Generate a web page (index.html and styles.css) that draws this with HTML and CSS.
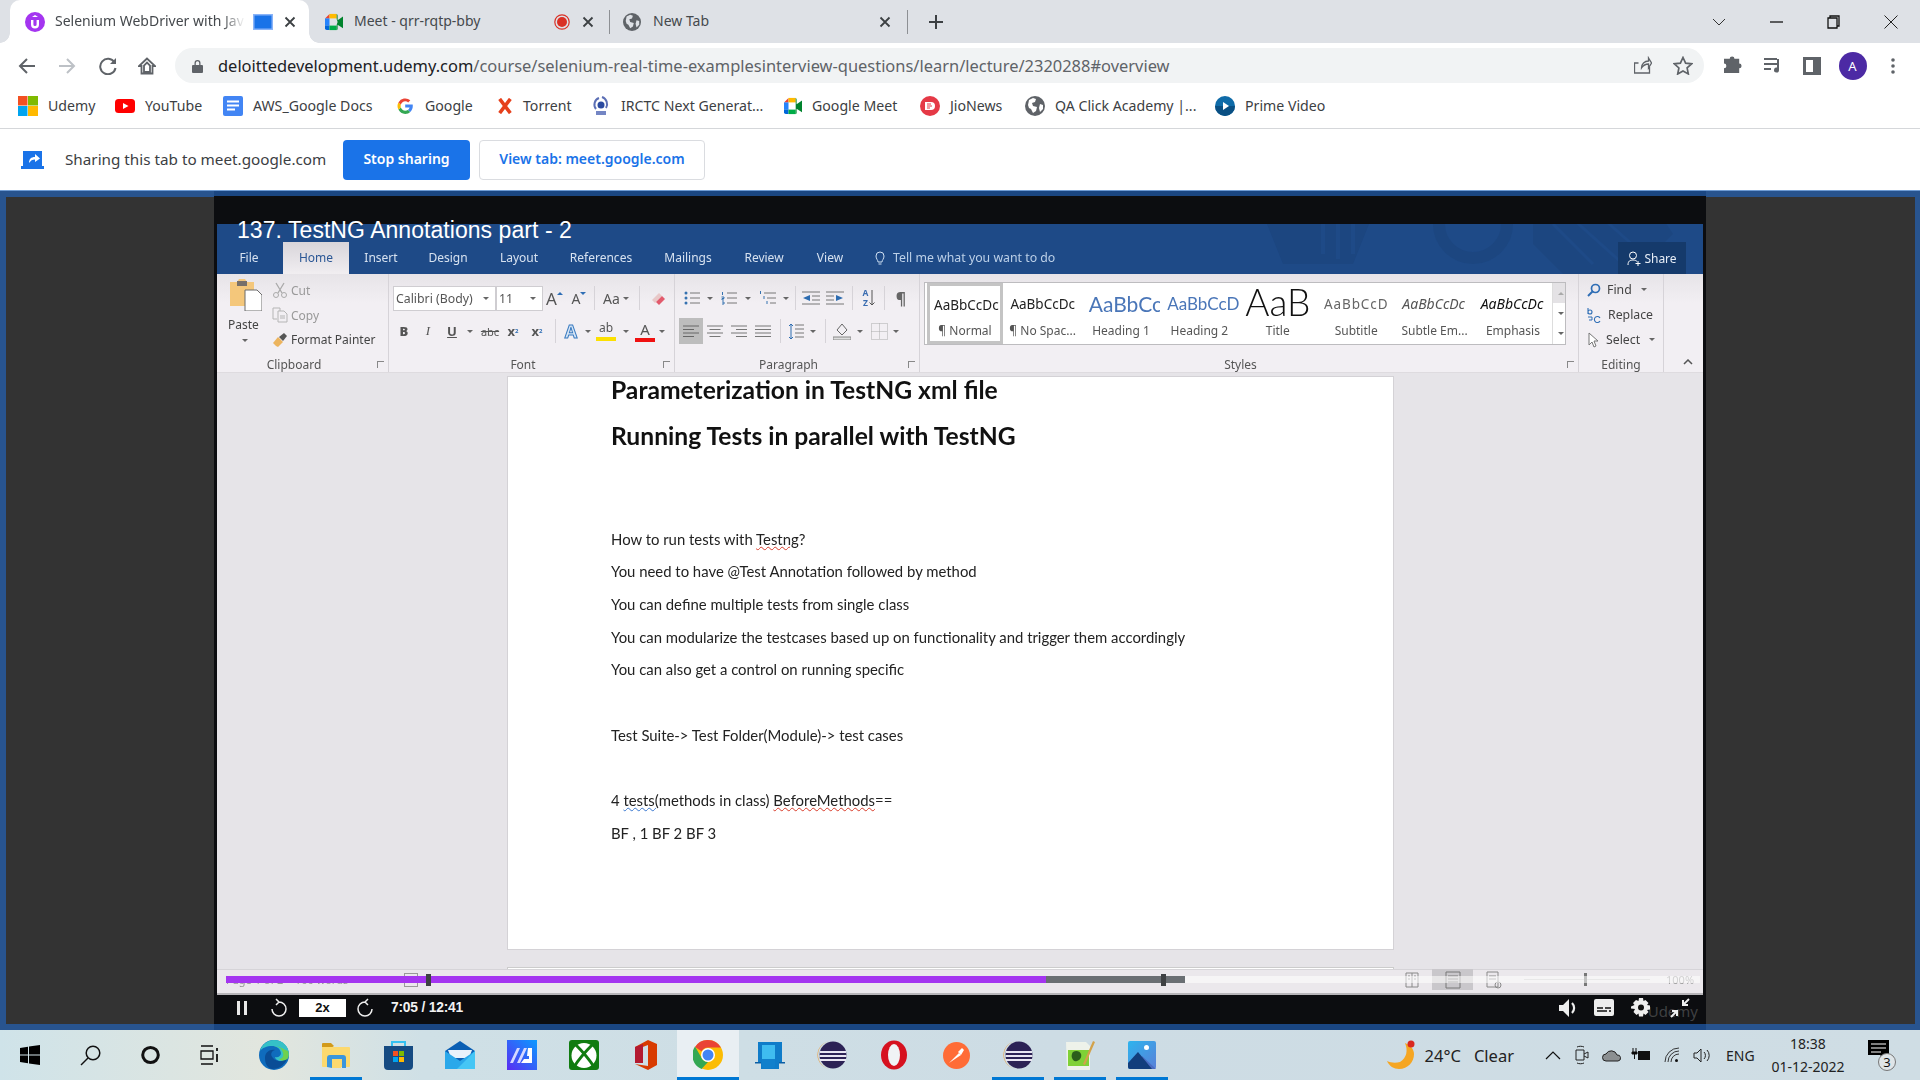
FILE: index.html
```html
<!DOCTYPE html>
<html lang="en">
<head>
<meta charset="utf-8">
<title>Selenium WebDriver with Java</title>
<link rel="stylesheet" href="styles.css">
</head>
<body>
<header class="tabstrip">
  <div class="tab active">
    <svg class="fav20" viewBox="0 0 20 20"><circle cx="10" cy="10" r="10" fill="#a435f0"/><path d="M6 8v4.500a4 4 0 0 0 8 0V8h-2.400v4.400a1.600 1.600 0 0 1-3.200 0V8z" fill="#fff"/><path d="M10 3l3 2H7z" fill="#fff"/></svg>
    <span class="tabtitle t190 fade">Selenium WebDriver with Jav</span>
    <svg class="capture" viewBox="0 0 20 16"><rect x=".75" y=".75" width="18.500" height="14.500" fill="#1a73e8" stroke="#8ab4f8" stroke-width="1.500"/></svg>
    <svg class="close c1" viewBox="0 0 12 12"><path d="M1.500 1.500l9 9m0-9l-9 9" stroke="#3c4043" stroke-width="1.800"/></svg>
  </div>
  <div class="tab second">
    <svg class="fav18" viewBox="0 0 20 18"><path d="M0 5l5-5v5z" fill="#ea4335"/><path d="M5 0h8v5H5z" fill="#ffba00"/><path d="M0 5h5v8H0z" fill="#2684fc"/><path d="M0 13h5v5H2a2 2 0 0 1-2-2z" fill="#0066da"/><path d="M5 13h8v5H5z" fill="#00ac47"/><path d="M13 0v6l1 3-1 3v6a2 2 0 0 0 1-1v-5l6 4V3l-6 4V2a2 2 0 0 0-1-2z" fill="#00832d"/></svg>
    <span class="tabtitle t190">Meet - qrr-rqtp-bby</span>
    <svg class="rec" viewBox="0 0 16 16"><circle cx="8" cy="8" r="7.200" fill="none" stroke="#d93025" stroke-width="1.200"/><circle cx="8" cy="8" r="5" fill="#d93025"/></svg>
    <svg class="close c2" viewBox="0 0 12 12"><path d="M1.500 1.500l9 9m0-9l-9 9" stroke="#3c4043" stroke-width="1.800"/></svg>
  </div>
  <i class="tabsep"></i>
  <div class="tab third">
    <svg class="fav18" viewBox="0 0 20 20"><circle cx="10" cy="10" r="10" fill="#5f6368"/><path d="M4 4l4-2 3 1-1 3-3 1 1 3 4 1-1 4-3 2-2-4-2-1-1-3z" fill="#dee1e6"/><path d="M15 8l3 1v4l-3 3-1-4z" fill="#dee1e6"/></svg>
    <span class="tabtitle t228">New Tab</span>
    <svg class="close" viewBox="0 0 12 12"><path d="M1.500 1.500l9 9m0-9l-9 9" stroke="#3c4043" stroke-width="1.800"/></svg>
  </div>
  <i class="tabsep"></i>
  <svg class="plus" viewBox="0 0 14 14"><path d="M7 0v14M0 7h14" stroke="#3c4043" stroke-width="2"/></svg>
  <div class="winctl">
    <span class="wc"><svg width="14" height="8" viewBox="0 0 14 8"><path d="M1 1l6 6 6-6" fill="none" stroke="#333" stroke-width="1"/></svg></span>
    <span class="wc"><svg width="13" height="2" viewBox="0 0 13 2"><path d="M0 1h13" stroke="#222" stroke-width="1.400"/></svg></span>
    <span class="wc"><svg width="13" height="14" viewBox="0 0 13 14"><path d="M1 3h9v10H1zM3 3V1h9v10h-2" fill="none" stroke="#111" stroke-width="1.300"/></svg></span>
    <span class="wc"><svg width="14" height="14" viewBox="0 0 14 14"><path d="M.5.500l13 13m0-13l-13 13" stroke="#222" stroke-width="1"/></svg></span>
  </div>
</header>

<nav class="toolbar">
  <span class="nb n40"><svg width="18" height="16" viewBox="0 0 18 16"><path d="M17 8H2M9 1L2 8l7 7" fill="none" stroke="#5f6368" stroke-width="2"/></svg></span>
  <span class="nb n40"><svg width="18" height="16" viewBox="0 0 18 16"><path d="M1 8h15M9 1l7 7-7 7" fill="none" stroke="#bdc1c6" stroke-width="2"/></svg></span>
  <span class="nb n41"><svg width="18" height="18" viewBox="0 0 18 18"><path d="M15.500 5.500A7.700 7.700 0 1 0 16.500 11" fill="none" stroke="#5f6368" stroke-width="2"/><path d="M17 1v6h-6z" fill="#5f6368"/></svg></span>
  <span class="nb n38"><svg width="18" height="18" viewBox="0 0 18 18"><path d="M9 1.500L1 9h2.500v7.500h11V9H17zM6 15V8.500L9 5.500l3 3V15z" fill="none" stroke="#5f6368" stroke-width="1.800"/></svg></span>
  <div class="omni">
    <svg class="lock" viewBox="0 0 11 14"><path d="M2.500 6V4a3 3 0 0 1 6 0v2h1.500a1 1 0 0 1 1 1v6a1 1 0 0 1-1 1H1a1 1 0 0 1-1-1V7a1 1 0 0 1 1-1zm1.300 0h3.400V4a1.700 1.700 0 0 0-3.400 0z" fill="#5f6368"/></svg>
    <span class="url"><b>deloittedevelopment.udemy.com</b>/course/selenium-real-time-examplesinterview-questions/learn/lecture/2320288#overview</span>
    <span class="nb n40"><svg width="18" height="20" viewBox="0 0 18 20"><path d="M16 12v6H1V8h4M8 13c0-4 3-7 7-7V3l3 5-3 5V9c-3 0-5 1-7 4z" transform="translate(-.5 -1)" fill="none" stroke="#5f6368" stroke-width="1.300"/></svg></span>
    <span class="nb n40"><svg width="20" height="19" viewBox="0 0 20 19"><path d="M10 1.500l2.600 5.600 6 .7-4.500 4.100 1.200 6L10 15l-5.300 3 1.200-6L1.400 7.800l6-.7z" fill="none" stroke="#5f6368" stroke-width="1.700"/></svg></span>
  </div>
  <span class="nb n40 ml9"><svg width="18" height="19" viewBox="0 0 18 19"><path d="M6 3a2.500 2.500 0 0 1 5 0h5v5a2.500 2.500 0 0 1 0 5v5H0v-5a2.500 2.500 0 0 0 0-5V3z" fill="#5f6368" transform="scale(.95)"/></svg></span>
  <span class="nb n39"><svg width="18" height="16" viewBox="0 0 18 16"><path d="M0 1h13M0 6h13M0 11h7" stroke="#5f6368" stroke-width="2"/><path d="M15 1v11a2.500 2.500 0 1 1-2-2.400V1z" fill="#5f6368"/></svg></span>
  <span class="nb n40"><svg width="18" height="18" viewBox="0 0 18 18"><path d="M0 0h18v18H0zM3 3v12h7V3z" fill="#5f6368" fill-rule="evenodd"/></svg></span>
  <span class="nb n41"><span class="avatar">A</span></span>
  <span class="nb n40"><svg width="4" height="16" viewBox="0 0 4 16"><circle cx="2" cy="2" r="1.800" fill="#5f6368"/><circle cx="2" cy="8" r="1.800" fill="#5f6368"/><circle cx="2" cy="14" r="1.800" fill="#5f6368"/></svg></span>
</nav>

<nav class="bookmarks">
  <span class="bm"><svg class="bi" viewBox="0 0 20 20"><path fill="#f25022" d="M0 0h9.500v9.500H0z"/><path fill="#7fba00" d="M10 0h10v9.500H10z"/><path fill="#00a4ef" d="M0 10h9.500v10H0z"/><path fill="#ffb900" d="M10 10h10v10H10z"/></svg>Udemy</span>
  <span class="bm"><svg class="bi" viewBox="0 0 20 20"><rect y="3" width="20" height="14" rx="3.500" fill="#f00"/><path d="M8 7l5.500 3L8 13z" fill="#fff"/></svg>YouTube</span>
  <span class="bm"><svg class="bi" viewBox="0 0 20 20"><rect width="20" height="20" rx="2" fill="#4285f4"/><path d="M4 5.500h12M4 9.500h12M4 13.500h8" stroke="#fff" stroke-width="2"/></svg>AWS_Google Docs</span>
  <span class="bm"><svg class="bg bgm" viewBox="0 0 16 16"><path d="M15.700 6.600H8.200v3h4.400a4.400 4.400 0 0 1-1.800 2.500l2.400 1.900c1.700-1.500 2.600-3.700 2.600-6 0-.5 0-1-.1-1.400z" fill="#4285f4"/><path d="M8.200 16c2.100 0 3.900-.7 5-2l-2.400-1.900c-.7.4-1.500.7-2.600.7-2 0-3.700-1.400-4.300-3.200L1.400 11.600A8 8 0 0 0 8.200 16z" fill="#34a853"/><path d="M3.900 9.600a4.800 4.800 0 0 1 0-3.200L1.400 4.400a8 8 0 0 0 0 7.200z" fill="#fbbc05"/><path d="M8.200 3.200c1.200 0 2.200.4 3 1.200L13.300 2.200A8 8 0 0 0 1.400 4.400L3.900 6.400C4.500 4.600 6.200 3.200 8.200 3.200z" fill="#ea4335"/></svg>Google</span>
  <span class="bm"><svg class="bg" viewBox="0 0 16 18"><path d="M2 1l12 16M14 1L2 17" stroke="#e6401c" stroke-width="4"/></svg>Torrent</span>
  <span class="bm"><svg class="bi" viewBox="0 0 20 20"><path d="M5 13a7 7 0 0 1 3-11" fill="none" stroke="#5c6fb5" stroke-width="2"/><path d="M11 1a7.500 7.500 0 0 1 4 11" fill="none" stroke="#5c6fb5" stroke-width="2"/><circle cx="10" cy="9" r="3.500" fill="#2b4aa0"/><path d="M5 15h10v4H5z" fill="#7486c4"/></svg>IRCTC Next Generat...</span>
  <span class="bm"><svg class="bi2" viewBox="0 0 20 18"><path d="M0 5l5-5v5z" fill="#ea4335"/><path d="M5 0h8v5H5z" fill="#ffba00"/><path d="M0 5h5v8H0z" fill="#2684fc"/><path d="M0 13h5v5H2a2 2 0 0 1-2-2z" fill="#0066da"/><path d="M5 13h8v5H5z" fill="#00ac47"/><path d="M13 0v18a2 2 0 0 0 1-1v-5l6 4V3l-6 4V2a2 2 0 0 0-1-2z" fill="#00832d"/></svg>Google Meet</span>
  <span class="bm"><svg class="bi" viewBox="0 0 20 20"><circle cx="10" cy="10" r="10" fill="#e53946"/><path d="M5 6h6a4 4 0 0 1 0 8H5z" fill="#fff"/><path d="M7 8h4M7 10h5M7 12h3" stroke="#e53946" stroke-width="1"/></svg>JioNews</span>
  <span class="bm"><svg class="bi" viewBox="0 0 20 20"><circle cx="10" cy="10" r="10" fill="#5f6368"/><path d="M4 4l4-2 3 1-1 3-3 1 1 3 4 1-1 4-3 2-2-4-2-1-1-3z" fill="#fff"/><path d="M15 8l3 1v4l-3 3-1-4z" fill="#fff"/></svg>QA Click Academy |...</span>
  <span class="bm"><svg class="bi" viewBox="0 0 20 20"><circle cx="10" cy="10" r="10" fill="#0f6ba8"/><path d="M0 10a10 10 0 0 0 20 0z" fill="#0a4f83"/><path d="M8 6l6 4-6 4z" fill="#fff"/></svg>Prime Video</span>
</nav>

<section class="infobar">
  <svg class="shareicon" viewBox="0 0 23 18"><path d="M2 0h19v15h2v3H0v-3h2z" fill="#1a73e8"/><path d="M8 12c0-4 2-6 6-6V3l5 4.500L14 11V8.500c-3 0-4 1-6 3.500z" fill="#fff"/></svg>
  <span class="infotext">Sharing this tab to meet.google.com</span>
  <button class="btn primary">Stop sharing</button>
  <button class="btn outline">View tab: meet.google.com</button>
</section>

<main class="stage">
  <aside class="side left"><div class="panel"></div></aside>
  <section class="mid">
    <div class="video">
      <div class="vtop"></div>
      <h1 class="coursetitle">137. TestNG Annotations part - 2</h1>
      <div class="word">
        <div class="titleband">
          <svg class="deco" width="500" height="50" viewBox="0 0 500 50"><path d="M60-10h110l-20 50h-70z" fill="#1c4680"/><path d="M120-10v40M135-10v45M150-10v40" stroke="#1e4a87" stroke-width="4"/><circle cx="270" cy="0" r="34" fill="none" stroke="#1c4680" stroke-width="12"/><path d="M330-20h120l20 30-40 40h-70l-30-30z" fill="#1c4680"/><path d="M350 0l40 40M370-5l50 45M395-10l45 40" stroke="#1e4a87" stroke-width="3"/></svg>
          <div class="wtabs">
            <span class="wt w66 ps">File</span>
            <span class="wt w66 on">Home</span>
            <span class="wt w66 ps">Insert</span>
            <span class="wt w68 ps">Design</span>
            <span class="wt w74 ps">Layout</span>
            <span class="wt w90 ps">References</span>
            <span class="wt w84 ps">Mailings</span>
            <span class="wt w68 ps">Review</span>
            <span class="wt w64 ps">View</span>
            <svg class="bulb" viewBox="0 0 10 14"><path d="M3 11C3 9 1 8 1 5a4 4 0 0 1 8 0c0 3-2 4-2 6zM3.500 13h3" fill="none" stroke="#cfe0f3" stroke-width="1"/></svg>
            <span class="tell">Tell me what you want to do</span>
            <span class="sharebtn"><svg width="14" height="15" viewBox="0 0 14 15"><circle cx="6" cy="4.500" r="3.500" fill="none" stroke="#fff"/><path d="M1 14c0-4 2-5 5-5 2 0 3 .5 4 1.500M11 10v5M8.500 12.500h5" fill="none" stroke="#fff"/></svg>Share</span>
          </div>
        </div>
        <div class="ribbon">
          <div class="grp clip">
            <div class="cliprow">
              <div class="paste">
                <svg width="32" height="33" viewBox="0 0 32 33"><path d="M0 4h7l2-3h6l2 3h7v24H0z" fill="#f4c77b"/><path d="M7 3h10v5H7z" fill="#77706a"/><path d="M15 12h12l5 5v16H15z" fill="#fff" stroke="#6b6b6b"/></svg>
                <span class="rl">Paste</span>
                <i class="caret"></i>
              </div>
              <div class="cliplist">
                <span class="ci dim"><svg width="16" height="16" viewBox="0 0 16 16"><path d="M4 1l6 10M12 1L6 11" stroke="#aaa" stroke-width="1.300"/><circle cx="4" cy="13" r="2.500" fill="none" stroke="#aaa"/><circle cx="12" cy="13" r="2.500" fill="none" stroke="#aaa"/></svg>Cut</span>
                <span class="ci dim"><svg width="16" height="16" viewBox="0 0 16 16"><path d="M1 1h7v3M1 1v11h4M6 4h6l3 3v8H6z" fill="none" stroke="#b5b5b5"/><path d="M8 9h5M8 11h5" stroke="#b5b5b5"/></svg>Copy</span>
                <span class="ci"><svg width="16" height="16" viewBox="0 0 16 16"><path d="M1 11l5-6 5 5-5 5-2-1z" fill="#ecb45e"/><path d="M7 5l5-4 3 3-4 5z" fill="#555"/></svg>Format Painter</span>
              </div>
            </div>
            <div class="glabel"><span>Clipboard</span><i class="launch"></i></div>
          </div>
          <div class="grp font">
            <div class="rrow">
              <span class="dd w103"><em>Calibri (Body)</em><i class="caret"></i></span>
              <span class="dd w47"><em>11</em><i class="caret"></i></span>
              <span class="c w23 big">A<sup class="up"></sup></span>
              <span class="c w26 small">A<sup class="dn"></sup></span>
              <i class="vd w4"></i>
              <span class="c w40 aa">Aa <i class="caret"></i></span>
              <i class="vd w6"></i>
              <span class="c w32"><svg width="15" height="15" viewBox="0 0 15 15"><path d="M1 9l7-7 3 3-7 7z" fill="#e8c8c8"/><path d="M8 14l6-6-3-3-6 6z" fill="#e25a6c"/></svg></span>
            </div>
            <div class="rrow">
              <span class="c w22 fb"><b>B</b></span>
              <span class="c w26 fb"><i>I</i></span>
              <span class="c w22 fb ul">U</span>
              <span class="c w14"><i class="caret"></i></span>
              <span class="c w26 abc">abc</span>
              <span class="c w20 fb">x<sub>2</sub></span>
              <span class="c w28 fb">x<sup>2</sup></span>
              <i class="vd w8"></i>
              <span class="c w24 outlineA">A</span>
              <span class="c w10"><i class="caret"></i></span>
              <span class="c w26"><span class="hl">ab</span></span>
              <span class="c w14"><i class="caret"></i></span>
              <span class="c w24"><span class="fc">A</span></span>
              <span class="c w10"><i class="caret"></i></span>
            </div>
            <div class="glabel"><span>Font</span><i class="launch"></i></div>
          </div>
          <div class="grp para">
            <div class="rrow">
              <span class="c w26"><svg width="16" height="14" viewBox="0 0 16 14"><path d="M6 2h10M6 7h10M6 12h10" stroke="#777"/><circle cx="2" cy="2" r="1.500" fill="#3572b0"/><circle cx="2" cy="7" r="1.500" fill="#3572b0"/><circle cx="2" cy="12" r="1.500" fill="#3572b0"/></svg></span>
              <span class="c w10"><i class="caret"></i></span>
              <span class="c w28"><svg width="16" height="14" viewBox="0 0 16 14"><path d="M6 2h10M6 7h10M6 12h10" stroke="#777"/><path d="M1.500 1v3M.5 6h2.500v1.500H1V9h2M1 11h2v2H1" fill="none" stroke="#3572b0"/></svg></span>
              <span class="c w10"><i class="caret"></i></span>
              <span class="c w28"><svg width="17" height="14" viewBox="0 0 17 14"><path d="M5 2h12M8 7h9M11 12h6" stroke="#777"/><path d="M1.500 0v3M5 5v3M8 10v3" stroke="#3572b0"/></svg></span>
              <span class="c w10"><i class="caret"></i></span>
              <i class="vd w8"></i>
              <span class="c w24"><svg width="18" height="14" viewBox="0 0 18 14"><path d="M0 1h18M10 5h8M10 9h8M0 13h18" stroke="#777"/><path d="M8 4v6L1 7z" fill="#2d6cb0"/></svg></span>
              <span class="c w24"><svg width="18" height="14" viewBox="0 0 18 14"><path d="M0 1h18M0 5h8M0 9h8M0 13h18" stroke="#777"/><path d="M10 4v6l7-3z" fill="#2d6cb0"/></svg></span>
              <i class="vd w10"></i>
              <span class="c w24 sort"><span class="az">A<br>Z</span><svg width="6" height="16" viewBox="0 0 6 16"><path d="M3 0v15M.5 12.500L3 15l2.500-2.500" fill="none" stroke="#555"/></svg></span>
              <i class="vd w6"></i>
              <span class="c w28 pil">¶</span>
            </div>
            <div class="rrow">
              <span class="c w24 sel"><svg width="16" height="13" viewBox="0 0 16 13"><path d="M0 1h16M0 4.500h11M0 8h16M0 11.500h11" stroke="#666"/></svg></span>
              <span class="c w24"><svg width="16" height="13" viewBox="0 0 16 13"><path d="M0 1h16M2.500 4.500h11M0 8h16M2.500 11.500h11" stroke="#777"/></svg></span>
              <span class="c w24"><svg width="16" height="13" viewBox="0 0 16 13"><path d="M0 1h16M5 4.500h11M0 8h16M5 11.500h11" stroke="#777"/></svg></span>
              <span class="c w24"><svg width="16" height="13" viewBox="0 0 16 13"><path d="M0 1h16M0 4.500h16M0 8h16M0 11.500h16" stroke="#777"/></svg></span>
              <i class="vd w10"></i>
              <span class="c w22"><svg width="16" height="17" viewBox="0 0 16 17"><path d="M7 2h9M7 6h9M7 10h9M7 14h9" stroke="#777"/><path d="M3 1v15M1 3l2-2 2 2M1 14l2 2 2-2" fill="none" stroke="#2d6cb0"/></svg></span>
              <span class="c w12"><i class="caret"></i></span>
              <i class="vd w12"></i>
              <span class="c w22"><svg width="18" height="18" viewBox="0 0 18 18"><path d="M4 8l5-6 5 6-5 5z" fill="none" stroke="#666"/><path d="M0 15h18v3H0z" fill="#ddd" stroke="#888"/></svg></span>
              <span class="c w14"><i class="caret"></i></span>
              <span class="c w24"><svg width="17" height="17" viewBox="0 0 17 17"><rect x=".5" y=".5" width="16" height="16" fill="none" stroke="#aaa" stroke-dasharray="1 1"/><path d="M.5 8.500h16M8.500 .5v16" stroke="#aaa" stroke-dasharray="1 1"/></svg></span>
              <span class="c w10"><i class="caret"></i></span>
            </div>
            <div class="glabel"><span>Paragraph</span><i class="launch"></i></div>
          </div>
          <div class="grp styles">
            <div class="gallery">
              <div class="st first"><span class="pv">AaBbCcDc</span><span class="sl">¶ Normal</span></div>
              <div class="st"><span class="pv">AaBbCcDc</span><span class="sl">¶ No Spac...</span></div>
              <div class="st"><span class="pv h1p">AaBbCc</span><span class="sl">Heading 1</span></div>
              <div class="st"><span class="pv h2p">AaBbCcD</span><span class="sl">Heading 2</span></div>
              <div class="st"><span class="pv tp">AaB</span><span class="sl">Title</span></div>
              <div class="st"><span class="pv sp">AaBbCcD</span><span class="sl">Subtitle</span></div>
              <div class="st"><span class="pv ep">AaBbCcDc</span><span class="sl">Subtle Em...</span></div>
              <div class="st"><span class="pv ep dark">AaBbCcDc</span><span class="sl">Emphasis</span></div>
              <div class="gscroll"><span><i class="tri up"></i></span><span><i class="caret"></i></span><span><i class="caret bar"></i></span></div>
            </div>
            <div class="glabel slabel"><span>Styles</span><i class="launch"></i></div>
          </div>
          <div class="grp edit">
            <span class="ei"><svg width="14" height="14" viewBox="0 0 14 14"><circle cx="8.500" cy="5.500" r="4" fill="none" stroke="#2f6eb5" stroke-width="1.700"/><path d="M6 8l-5 5" stroke="#2f6eb5" stroke-width="2"/></svg>Find<i class="caret"></i></span>
            <span class="ei"><svg width="15" height="16" viewBox="0 0 15 16"><path d="M1 1v6M1 5a2 2 0 1 1 4 0 2 2 0 1 1-4 0M13 11a3 3 0 1 0 0 3" fill="none" stroke="#2f6eb5" stroke-width="1.100"/><path d="M1 10h4v3H2" fill="none" stroke="#2f6eb5"/></svg>Replace</span>
            <span class="ei"><svg width="13" height="16" viewBox="0 0 13 16"><path d="M2 1v12l3-3 2 5 2-1-2-5h4z" fill="#fff" stroke="#777"/></svg>Select<i class="caret"></i></span>
            <div class="glabel elabel"><span>Editing</span></div>
          </div>
          <div class="collapse"><svg width="10" height="6" viewBox="0 0 10 6"><path d="M1 5l4-4 4 4" fill="none" stroke="#555" stroke-width="1.500"/></svg></div>
        </div>
        <div class="docarea">
          <article class="page">
            <h2>Parameterization in TestNG xml file</h2>
            <h2>Running Tests in parallel with TestNG</h2>
            <div class="gap"></div>
            <p>How to run tests with <u class="sp-r">Testng</u>?</p>
            <p>You need to have @Test Annotation followed by method</p>
            <p>You can define multiple tests from single class</p>
            <p>You can modularize the testcases based up on functionality and trigger them accordingly</p>
            <p>You can also get a control on running specific</p>
            <p>&nbsp;</p>
            <p>Test Suite-&gt; Test Folder(Module)-&gt; test cases</p>
            <p>&nbsp;</p>
            <p>4 <u class="sp-b">tests(</u>methods in class) <u class="sp-r">BeforeMethods</u>==</p>
            <p>BF , 1 BF 2 BF 3</p>
          </article>
          <div class="nextpage"></div>
        </div>
        <div class="statusbar">
          <span class="swords">Page 1 of 2 &nbsp;&nbsp; 100 words</span>
          <svg width="14" height="14" viewBox="0 0 14 14"><rect x=".5" y=".5" width="13" height="13" fill="none" stroke="#999"/></svg>
          <span class="views">
            <span class="vw"><svg width="14" height="18" viewBox="0 0 14 18"><path d="M1 2h12v14H1zM7 2v14M3 5h2M3 8h2M9 5h2M9 8h2" fill="none" stroke="#888"/></svg></span>
            <span class="vw on"><svg width="16" height="18" viewBox="0 0 16 18"><path d="M1 1h14v16H1zM3 5h10M3 8h10M3 11h10" fill="none" stroke="#777"/></svg></span>
            <span class="vw"><svg width="16" height="18" viewBox="0 0 16 18"><path d="M1 1h11v15H1zM3 5h7M3 8h7" fill="none" stroke="#888"/><circle cx="12" cy="14" r="3" fill="none" stroke="#888"/></svg></span>
          </span>
          <span class="zoomline"><i class="thumb"></i></span>
          <span class="zoompct">100%</span>
        </div>
      </div>
      <div class="progress"><i class="played"></i><i class="buffer"></i><i class="knob k1"></i><i class="knob k2"></i></div>
      <div class="controls">
        <span class="cb w20"><svg width="12" height="14" viewBox="0 0 12 14"><path d="M1 0h3v14H1zM8 0h3v14H8z" fill="#e8e8e8"/></svg></span>
        <span class="cb w26 ml14b"><svg width="17" height="19" viewBox="0 0 17 19"><path d="M8 4a7 7 0 1 1-7 7M8 4L5 1M8 4L5 7" transform="translate(1 0)" fill="none" stroke="#eee" stroke-width="1.500"/></svg></span>
        <span class="speed">2x</span>
        <span class="cb w26 ml7"><svg width="17" height="19" viewBox="0 0 17 19"><path d="M8 4a7 7 0 1 0 7 7M8 4l3-3M8 4l3 3" fill="none" stroke="#eee" stroke-width="1.500"/></svg></span>
        <span class="time">7:05 / 12:41</span>
        <span class="cright">
          <span class="cb w37 vol"><svg width="19" height="20" viewBox="0 0 19 20"><path d="M0 7h4l6-6v18l-6-6H0z" fill="#eee"/><path d="M13 5a7 7 0 0 1 0 10" fill="none" stroke="#eee" stroke-width="2.200"/></svg></span>
          <span class="cb w37"><svg width="20" height="17" viewBox="0 0 20 17"><rect width="20" height="17" rx="2" fill="#eee"/><path d="M3 9h6M11 9h6M3 12h10M15 12h2" stroke="#111" stroke-width="1.500"/></svg></span>
          <span class="cb w37"><svg width="20" height="20" viewBox="0 0 20 20"><path d="M8 0h4l.5 3 2-1 3 3-1.500 2 3 .5v4l-3 .5 1.500 2-3 3-2-1.500-.5 3H8l-.5-3-2 1.500-3-3L4 11l-4-.5v-2L3.500 7 2 5l3-3 2.500 1z" fill="#eee"/><circle cx="10" cy="9.500" r="3" fill="#111"/></svg></span>
          <span class="cb w37 exp"><svg width="20" height="20" viewBox="0 0 20 20"><path d="M19 1l-6 6M13 2v5h5M1 19l6-6M7 18v-5H2" fill="none" stroke="#eee" stroke-width="2"/></svg></span>
          <span class="wm">Udemy</span>
        </span>
      </div>
    </div>
  </section>
  <aside class="side right"><div class="panel"></div></aside>
</main>

<footer class="taskbar">
  <div class="sysbtns">
    <span class="sb"><svg width="20" height="20" viewBox="0 0 20 20"><path d="M0 3l8-1.200v7.700H0zM9 1.600L20 0v9.500H9zM0 10.500h8v7.700L0 17zM9 10.500h11V20L9 18.400z" fill="#000"/></svg></span>
    <span class="sb"><svg width="21" height="21" viewBox="0 0 21 21"><circle cx="13" cy="8" r="6.800" fill="none" stroke="#111" stroke-width="1.500"/><path d="M8 13l-7 7" stroke="#111" stroke-width="1.500"/></svg></span>
    <span class="sb"><svg width="19" height="18" viewBox="0 0 19 18"><ellipse cx="9.500" cy="9" rx="7.800" ry="7.500" fill="none" stroke="#111" stroke-width="3"/></svg></span>
    <span class="sb"><svg width="20" height="20" viewBox="0 0 20 20"><path d="M1 1h12M1 19h12M1 6h12v8H1z" fill="none" stroke="#111" stroke-width="1.300"/><path d="M17 3v3M17 9v8" stroke="#111" stroke-width="1.800"/></svg></span>
  </div>
  <div class="apps">
    <span class="app"><svg width="30" height="30" viewBox="0 0 30 30"><circle cx="15" cy="15" r="15" fill="#0f6cbd"/><path d="M1 11C3 4 9 0 15 0c9 0 15 7 15 14 0 4-3 7-8 7-3 0-6-2-6-4 3 1 6-1 6-4-1-5-5-7-9-7C8 6 3 8 1 11z" fill="#35c1c7"/><path d="M15 6c5 0 9 3 14 5 1 3 1 8-2 9-2 1-5 1-7-1 3 0 5-3 4-6-1-5-5-7-9-7z" fill="#6fd14e"/><path d="M6 18c0-6 5-9 10-8-4 1-5 5-2 8 3 4 10 4 14 1-3 7-9 10-15 10-5-1-7-6-7-11z" fill="#0a4d96"/></svg></span>
    <span class="app on"><svg width="28" height="25" viewBox="0 0 28 25"><path d="M0 1a1 1 0 0 1 1-1h8l3 3-3 2H0z" fill="#d29a1a"/><path d="M0 4h27a1 1 0 0 1 1 1v18a1 1 0 0 1-1 1H1a1 1 0 0 1-1-1z" fill="#fcd96e"/><path d="M5 24V15a3 3 0 0 1 3-3h13a3 3 0 0 1 3 3v10h-4V16H10v9z" fill="#3a96dd"/><path d="M10 20h9v5h-9z" fill="#fcd96e"/></svg></span>
    <span class="app"><svg width="29" height="30" viewBox="0 0 29 30"><path d="M8 6V2h13v4" fill="none" stroke="#35c1f1" stroke-width="2"/><path d="M0 6h29v20a4 4 0 0 1-4 4H4a4 4 0 0 1-4-4z" fill="#164b82"/><path d="M9 11h5v5H9z" fill="#f25022"/><path d="M15 11h5v5h-5z" fill="#7fba00"/><path d="M9 17h5v5H9z" fill="#00a4ef"/><path d="M15 17h5v5h-5z" fill="#ffb900"/></svg></span>
    <span class="app"><svg width="30" height="28" viewBox="0 0 30 28"><path d="M15 0l15 10v18H0V10z" fill="#0b5fb4"/><path d="M3 9h24l-3 8H6z" fill="#e8f2fb"/><path d="M0 10l15 10 15-10v18H0z" fill="#2aa8ea"/><path d="M30 10v18H12z" fill="#45c6f5"/></svg></span>
    <span class="app"><svg width="30" height="30" viewBox="0 0 30 30"><defs><linearGradient id="ma" x1="0" y1="1" x2="1" y2="0"><stop offset="0" stop-color="#5a2cf2"/><stop offset="1" stop-color="#0a9bff"/></linearGradient></defs><rect width="30" height="30" fill="url(#ma)"/><path d="M3 23L10 8h3L6 23zM10 23l7-15h3l-7 15z" fill="#d6d8ff"/><path d="M21 8h4v15h-11l3-4h5v-3h-2z" fill="#fff"/></svg></span>
    <span class="app"><svg width="30" height="30" viewBox="0 0 30 30"><rect width="30" height="30" rx="3" fill="#107c10"/><circle cx="15" cy="15.500" r="12.500" fill="#fff"/><path d="M6 4C11 9 19 17 25 27M24 4C19 9 11 17 5 27" fill="none" stroke="#107c10" stroke-width="3"/></svg></span>
    <span class="app"><svg width="22" height="30" viewBox="0 0 22 30"><path d="M0 7L13 0l9 4v21l-9 5-13-6 13 2V5L5 8v11l-5 4z" fill="#d83b01"/><path d="M0 7l8-3v19L0 23z" fill="#b31a30"/></svg></span>
    <span class="app on light"><svg width="30" height="30" viewBox="0 0 30 30"><circle cx="15" cy="15" r="15" fill="#fbbc04"/><path d="M15 0a15 15 0 0 1 13 7.500H15a7.500 7.500 0 0 0-6.500 3.800L2 7A15 15 0 0 1 15 0z" fill="#ea4335"/><path d="M2 7l6.500 11.300A7.500 7.500 0 0 0 15 22.500L8.500 29.500A15 15 0 0 1 2 7z" fill="#34a853" transform="translate(0 -.5)"/><circle cx="15" cy="15" r="7" fill="#fff"/><circle cx="15" cy="15" r="5.500" fill="#4285f4"/></svg></span>
    <span class="app"><svg width="30" height="27" viewBox="0 0 30 27"><path d="M3 0h24v20H3z" fill="#0f7cc9"/><path d="M0 20h30v1.500H0z" fill="#0b5fa5"/><path d="M6 3h18v24H6z" fill="#0f7cc9"/><path d="M7 3h13v14H7z" fill="#3fbcf0"/><path d="M7 17h13v7a2 2 0 0 1-2 2H9a2 2 0 0 1-2-2z" fill="#1180cc"/></svg></span>
    <span class="app"><svg width="30" height="30" viewBox="0 0 30 30"><use href="#eclipse"/></svg></span>
    <span class="app"><svg width="28" height="30" viewBox="0 0 28 30"><ellipse cx="14" cy="15" rx="13" ry="14.500" fill="#d6111f"/><ellipse cx="14" cy="15" rx="6" ry="11" fill="#f0f3f5"/></svg></span>
    <span class="app"><svg width="27" height="27" viewBox="0 0 27 27"><circle cx="13.500" cy="13.500" r="13.500" fill="#ff6c37"/><path d="M6 21l10-10 2 2z" fill="#fff"/><path d="M15 10l4-4 2 2-3 5z" fill="#fff"/></svg></span>
    <span class="app on"><svg width="30" height="30" viewBox="0 0 30 30"><defs><g id="eclipse"><path d="M15 1a14 14 0 0 0 0 28A14.500 14 0 0 1 15 1z" fill="#f0962c"/><circle cx="16" cy="15" r="13.500" fill="#2c2255"/><path d="M3 11h26v2H3zM2.500 15h27v2h-27zM3 19h26v2H3z" fill="#e9e6f2"/></g></defs><use href="#eclipse"/></svg></span>
    <span class="app on"><svg width="30" height="30" viewBox="0 0 30 30"><path d="M1 2h20l4 4v24H2z" fill="#eef2ea"/><path d="M3 10h21v16H3z" fill="#7fd136"/><path d="M8 12c3-2 7-1 8 2s-1 6-4 7-4-1-5-3 0-5 1-6z" fill="#2b5f1b"/><path d="M18 24L28 1l2 1-10 23z" fill="#d3a24a"/></svg></span>
    <span class="app on"><svg width="28" height="28" viewBox="0 0 28 28"><defs><linearGradient id="ph" x1="0" y1="0" x2="1" y2="1"><stop offset="0" stop-color="#2db4ee"/><stop offset="1" stop-color="#5a80d8"/></linearGradient></defs><rect width="28" height="28" rx="2" fill="url(#ph)"/><circle cx="18.500" cy="6.500" r="2.500" fill="#fff"/><path d="M14 15l14 13H16l-2-6z" fill="#4a6cc2"/><path d="M0 22l10-11 14 17H2a2 2 0 0 1-2-2z" fill="#123e7c"/></svg></span>
  </div>
  <div class="tray">
    <svg class="moon" width="29" height="30" viewBox="0 0 29 30"><path d="M19 3c3 7 2 15-5 19-4 1-9 1-13-1 2 5 7 8 12 8 9 0 15-7 15-15 0-4-3-9-9-11z" fill="#f5a623"/><circle cx="25" cy="4" r="3.500" fill="#d9281e"/></svg>
    <span class="temp">24°C</span>
    <span class="cond">Clear</span>
    <span class="tc w16 ml39"><svg width="16" height="9" viewBox="0 0 16 9"><path d="M1 8l7-7 7 7" fill="none" stroke="#111" stroke-width="1.200"/></svg></span>
    <span class="tc w14 ml14"><svg width="14" height="20" viewBox="0 0 14 20"><path d="M1 5h8v10H1zM9 9l4-2v6l-4-2M2 2c2-1 5-1 7 0M2 18c2 1 5 1 7 0" fill="none" stroke="#222"/></svg></span>
    <span class="tc w20 ml16"><svg width="20" height="13" viewBox="0 0 20 13"><path d="M4 12a3.500 3.500 0 0 1 0-7 6 6 0 0 1 11 1 3 3 0 0 1 1 6z" fill="#8b8f91" stroke="#222"/></svg></span>
    <span class="tc w20 ml8"><svg width="20" height="14" viewBox="0 0 20 14"><path d="M2 0v4M5 0v4M1 4h5v2H1zM3.500 6v5" stroke="#111"/><path d="M7 3h12v9H7z" fill="#111"/></svg></span>
    <span class="tc w16 ml13"><svg width="16" height="16" viewBox="0 0 16 16"><path d="M1 15A14 14 0 0 1 15 1M4 15A11 11 0 0 1 15 4M7 15a8 8 0 0 1 8-8" fill="none" stroke="#222" stroke-width=".9"/><circle cx="12.500" cy="13.500" r="1.500" fill="#111"/></svg></span>
    <span class="tc w20 ml13"><svg width="20" height="17" viewBox="0 0 20 17"><path d="M1 6h3l4-4v13l-4-4H1zM11 5a5 5 0 0 1 0 7M14 3a8 8 0 0 1 0 11" fill="none" stroke="#222"/></svg></span>
    <span class="eng">ENG</span>
    <span class="clock"><span>18:38</span><span>01-12-2022</span></span>
    <span class="notif"><svg width="21" height="20" viewBox="0 0 21 20"><path d="M0 0h21v15h-4v5l-5-5H0z" fill="#000"/><path d="M3 4h15M3 8h15M3 12h10" stroke="#fff"/></svg><b class="badge">3</b></span>
  </div>
</footer>
</body>
</html>
```

FILE: styles.css
```css
*{box-sizing:border-box}
html,body{margin:0;padding:0}
body{width:1920px;height:1080px;overflow:hidden;display:flex;flex-direction:column;font-family:"Noto Sans","Open Sans",sans-serif;color:#3c4043;background:#fff}
i,em{font-style:normal}
svg{display:block;flex:none}

/* tab strip */
.tabstrip{height:43px;background:#dee1e6;display:flex;align-items:center;flex:none;padding-left:10px}
.tab{height:43px;display:flex;align-items:center;position:relative;flex:none}
.tab.active{width:299px;background:#fff;border-radius:10px 10px 0 0;padding-left:15px}
.tab.active::before,.tab.active::after{content:"";position:absolute;bottom:0;width:10px;height:10px}
.tab.active::before{left:-10px;background:radial-gradient(circle at 0 0,#dee1e6 9.500px,#fff 10px)}
.tab.active::after{right:-10px;background:radial-gradient(circle at 100% 0,#dee1e6 9.500px,#fff 10px)}
.tab.second{width:300px;padding-left:16px}
.tab.third{width:297px;padding-left:13px}
.fav20{width:20px;height:20px}
.fav18{width:18px;height:18px}
.tabtitle{font-size:14px;margin-left:10px;padding-bottom:2px;white-space:nowrap;overflow:hidden;color:#45494d;line-height:20px}
.second .tabtitle{margin-left:11px}
.third .tabtitle{margin-left:12px}
.t190{width:190px}
.t228{width:226px}
.fade{-webkit-mask-image:linear-gradient(90deg,#000 88%,transparent)}
.capture{width:20px;height:16px;margin-left:8px}
.close{width:12px;height:12px}
.close.c1{margin-left:11px}
.close.c2{margin-left:12px}
.rec{width:16px;height:16px;margin-left:10px}
.tabsep{width:1px;height:24px;background:#8d9094;flex:none}
.plus{width:14px;height:14px;margin-left:21px}
.winctl{margin-left:auto;display:flex;height:36px}
.wc{width:57.500px;display:flex;align-items:center;justify-content:center}

/* toolbar */
.toolbar{height:43px;background:#fff;display:flex;align-items:center;padding-left:7px;flex:none}
.nb{display:flex;align-items:center;justify-content:center;height:35px;flex:none;margin-top:2px}
.n38{width:38px}.n39{width:39px}.n40{width:40px}.n41{width:41px}
.ml9{margin-left:9px}
.omni{margin-left:9px;width:1529px;height:35px;margin-top:2px;background:#f1f3f4;border-radius:18px;display:flex;align-items:center;padding-left:17px;padding-right:1px;flex:none}
.omni .nb{margin-top:0}
.lock{width:11px;height:14px}
.url{flex:1;margin-left:15px;font-size:16.450px;color:#5f6368;white-space:nowrap}
.url b{font-weight:400;color:#202124}
.avatar{width:28px;height:28px;border-radius:50%;background:#4c2aa4;color:#fff;font-size:13px;display:flex;align-items:center;justify-content:center}

/* bookmarks */
.bookmarks{height:43px;background:#fff;border-bottom:1px solid #d5d7da;padding-bottom:3px;display:grid;grid-template-columns:97px 108px 174px 100px 94px 193px 136px 105px 190px 1fr;padding-left:18px;align-items:center;flex:none}
.bm{display:flex;align-items:center;font-size:14.150px;color:#3c4043;white-space:nowrap;gap:10px}
.bi{width:20px;height:20px}
.bi2{width:18px;height:18px}
.bg{width:16px;height:16px}
.bgm{margin-right:2px}

/* infobar */
.infobar{height:61px;background:#fff;display:flex;align-items:center;padding-left:21px;flex:none}
.shareicon{width:23px;height:18px}
.infotext{font-size:15.250px;margin-left:21px;width:278px;white-space:nowrap;color:#3c4043;padding-bottom:2px}
.btn{height:40px;border-radius:4px;font-family:inherit;font-size:14px;font-weight:600;padding:0 0 2px;cursor:default}
.primary{width:127px;background:#1a73e8;color:#fff;border:0}
.outline{width:226px;margin-left:9px;background:#fff;color:#1a73e8;border:1px solid #dadce0}

/* stage */
.stage{height:840px;display:grid;grid-template-columns:214px 1492px 214px;flex:none;border-top:1px solid #6f9cd4}
.side{background:#28548f;padding-top:6px;padding-bottom:6px}
.side.left{padding-left:6px}
.side.right{padding-right:5px}
.panel{height:100%;background:#333}
.mid{background:#1a4682;padding:5px 0 6px}
.video{height:100%;background:#0c0d10;display:flex;flex-direction:column;position:relative;overflow:hidden}
.vtop{height:28px;flex:none}
.coursetitle{position:absolute;left:23px;top:20px;margin:0;font:400 23px/28px "Liberation Sans",sans-serif;letter-spacing:.05px;color:#fff;z-index:2}

/* word window */
.word{width:1486px;margin-left:3px;height:771px;display:flex;flex-direction:column;flex:none;filter:blur(.35px)}
.titleband{height:50px;background:#1e4a87;position:relative;flex:none;display:flex;align-items:flex-end;overflow:hidden}
.deco{position:absolute;right:0;top:0}
.wtabs{display:flex;align-items:flex-end;height:32px;width:100%;position:relative}
.wt{height:32px;line-height:32px;text-align:center;color:#d7e2f0;font-size:12px;flex:none}
.wt.ps{padding-right:2px}
.wt.on{background:linear-gradient(#d8d5da,#f1eef1);color:#2b5795}
.w64{width:64px}.w66{width:66px}.w68{width:68px}.w74{width:74px}.w84{width:84px}.w90{width:90px}
.bulb{width:10px;height:14px;margin:0 0 9px 12px}
.tell{font-size:12.300px;color:#bcd0e8;margin-left:8px;line-height:32px;white-space:nowrap}
.sharebtn{margin-left:auto;margin-right:17px;width:68px;height:32px;background:#153a6b;color:#e7eef7;font-size:12px;display:flex;align-items:center;justify-content:center;gap:3px}

/* ribbon */
.ribbon{height:99px;background:linear-gradient(#e7e4e8,#f2eff3 30%);display:flex;flex:none;border-bottom:1px solid #dedbdf;color:#444;font-size:12px}
.grp{height:98px;position:relative;border-right:1px solid #d6d3d8;flex:none;display:flex;flex-direction:column;padding-top:11px}
.clip{width:172px;padding-left:13px;padding-top:4px}
.font{width:286px;padding-left:4px}
.para{width:245px;padding-left:4px}
.styles{width:659px;padding-left:4px;padding-top:8px}
.edit{width:85px;padding-left:8px;padding-top:3px}
.rrow{height:26px;display:flex;align-items:center;margin-bottom:7px}
.c{display:flex;align-items:center;justify-content:center;height:26px;flex:none;color:#555}
.w4{width:4px}.w6{width:6px}.w8{width:8px}.w10{width:10px}.w12{width:12px}.w14{width:14px}.w16{width:16px}.w20{width:20px}.w22{width:22px}.w23{width:23px}.w24{width:24px}.w26{width:26px}.w28{width:28px}.w32{width:32px}.w37{width:37px}.w40{width:40px}.w47{width:47px}.w103{width:103px}
.vd{height:24px;position:relative;flex:none}
.vd::after{content:"";position:absolute;left:50%;top:0;bottom:0;width:1px;background:#d6d3d8}
.caret{display:inline-block;width:0;height:0;border:3px solid transparent;border-top:3.500px solid #666;border-bottom:0;flex:none}
.dd{height:25px;background:#fff;border:1px solid #cfcdd1;display:flex;align-items:center;justify-content:space-between;padding:0 6px 0 2px;color:#555;font-size:12.300px;white-space:nowrap;flex:none}
.big{font-size:17px}
.small{font-size:14px}
.c sup.up,.c sup.dn{width:0;height:0;border:3px solid transparent;margin-bottom:10px}
.c sup.up{border-bottom:3px solid #2f6eb5;border-top:0}
.c sup.dn{border-top:3px solid #2f6eb5;border-bottom:0}
.aa{font-size:14px;gap:3px}
.fb{font:700 13px "Noto Sans",sans-serif;color:#555}
.fb i{font:italic 400 13px "Liberation Serif",serif}
.fb sub,.fb sup{font-size:6px;color:#2f6eb5}
.fb.ul{text-decoration:underline}
.abc{font-size:11px;text-decoration:line-through}
.outlineA{font:700 18px "Noto Sans",sans-serif;color:#d8e6f6;-webkit-text-stroke:1px #3a7bc0}
.hl{font-size:12px;height:20px;border-bottom:4px solid #fce000;line-height:14px;width:20px;text-align:center;display:block}
.fc{font-size:15px;height:21px;border-bottom:4px solid #f01010;line-height:16px;width:20px;text-align:center;display:block}
.sort{gap:1px}
.az{font:700 8.500px/10.500px "Noto Sans",sans-serif;color:#3a6cb0;text-align:center}
.pil{font-size:16px;font-weight:700;color:#666}
.sel{background:#bdbdbd}
.cliprow{display:flex;height:74px}
.paste{width:42px;display:flex;flex-direction:column;align-items:flex-start;flex:none}
.rl{font-size:12px;line-height:16px;margin:6px 0 0 -2px}
.paste .caret{margin:6px 0 0 12px}
.cliplist{display:flex;flex-direction:column}
.ci{height:25px;display:flex;align-items:center;gap:3px;font-size:12px;white-space:nowrap}
.ci.dim{color:#999}
.glabel{position:absolute;left:0;right:0;bottom:0;height:16px;display:flex;align-items:center;padding-right:4px;font-size:12px;color:#555}
.glabel span{flex:1;text-align:center;margin-right:6px}
.launch{width:7px;height:7px;border-left:1px solid #888;border-top:1px solid #888;flex:none}
.gallery{width:642px;height:63px;background:#fff;border:1px solid #bdbcbf;display:flex;overflow:hidden}
.st{width:78.400px;display:flex;flex-direction:column;align-items:center;height:61px;flex:none;overflow:hidden}
.st.first{border:3px solid #c4c4c4;width:76px;margin-left:2px;margin-right:.400px}
.pv{display:block;width:100%;height:38px;font:13.500px/42px "Noto Sans",sans-serif;color:#222;white-space:nowrap;overflow:hidden;flex:none;padding:0 4px 0 7px}
.first .pv{height:35px;line-height:38px;padding:0 2px 0 4px}
.sl{font-size:12px;line-height:18px;color:#555;white-space:nowrap;margin-top:1px}
.h1p{font:400 21px/42px Lato,sans-serif;color:#4a76b8}
.h2p{font:400 17px/42px Lato,sans-serif;color:#4a76b8}
.tp{font:300 37px/38px Lato,sans-serif;color:#111;text-align:center;padding:0}
.sp{font-size:13.500px;letter-spacing:.9px;color:#666}
.ep{font-style:italic;color:#555;font-size:14px}
.ep.dark{color:#111}
.gscroll{width:16px;flex:none;margin-left:auto;display:flex;flex-direction:column;border-left:1px solid #ddd}
.gscroll span{flex:1;display:flex;align-items:center;justify-content:center;background:#fff}
.gscroll span:first-child{background:#e4e2e5}
.tri.up{width:0;height:0;border:3px solid transparent;border-bottom:3px solid #aaa;border-top:0}
.caret.bar{box-shadow:0 -3px 0 -2.500px #666}
.ei{height:25px;display:flex;align-items:center;gap:6px;font-size:12.300px;white-space:nowrap}
.ei .caret{margin-left:3px}
.elabel{padding-right:0}
.elabel span{margin-right:0}
.collapse{width:38px;display:flex;align-items:center;justify-content:center;height:98px;padding:78px 0 0 10px;flex:none}

/* document */
.docarea{height:597px;background:#e6e4e8;padding-left:290px;padding-top:3px;flex:none;overflow:hidden;border-bottom:1px solid #d6d4d8}
.page{width:887px;height:574px;background:#fff;border:1px solid #d4d2d6;padding:0 0 0 103px;font-family:Lato,"Liberation Sans",sans-serif;color:#222}
.page h2{margin:0;font:700 24.650px/25px Lato,sans-serif;color:#111;height:46px}
.gap{height:53.500px}
.page p{margin:0;height:32.700px;line-height:32.700px;font-size:14.880px;white-space:nowrap}
.sp-r{text-decoration:underline wavy #d83b2a 1px}
.sp-b{text-decoration:underline wavy #3a78d0 1px}
.nextpage{width:887px;height:3px;background:#fff;margin-top:17px;border:1px solid #ccc;border-bottom:0}
.statusbar{height:25px;background:#ebe8ec;display:flex;align-items:center;padding:0 0 4px 9px;font-size:11px;color:#999;flex:none;border-bottom:2px solid #b7b5b9;position:relative}
.swords{width:178px;white-space:nowrap}
.views{display:flex;margin-left:auto;height:21px}
.vw{width:41px;display:flex;align-items:center;justify-content:center}
.vw.on{background:#c9c7cb}
.zoomline{width:126px;height:1px;background:#ccc;margin-left:10px;position:relative}
.thumb{position:absolute;left:60px;top:-6px;width:3px;height:13px;background:#777}
.zoompct{margin:0 9px 0 16px;width:28px}

/* video overlay */
.progress{position:absolute;left:12px;right:6px;top:780px;height:7px;background:rgba(255,255,255,.55);z-index:3}
.played{position:absolute;left:0;top:0;bottom:0;width:820px;background:#a435f0}
.buffer{position:absolute;left:820px;top:0;bottom:0;width:139px;background:#6a6f73}
.knob{position:absolute;top:-2px;width:5px;height:12px;background:#3e4143}
.k1{left:200px}
.k2{left:935px}
.controls{flex:1;display:flex;align-items:center;padding:0 0 4px 18px;color:#fff}
.cb{display:flex;align-items:center;justify-content:center;height:20px;flex:none}
.ml14b{margin-left:13px}
.ml7{margin-left:6px}
.speed{width:47px;height:18px;background:#fff;color:#111;font:700 13px/18px "Liberation Sans",sans-serif;text-align:center;margin-left:8px;flex:none}
.time{font:700 13.800px "Liberation Sans",sans-serif;margin-left:13px;color:#f2f2f2;letter-spacing:-.2px}
.cright{margin-left:auto;display:flex;margin-right:8px;position:relative;align-items:center}
.vol{margin-right:-2px}
.exp{margin-left:2px}
.wm{position:absolute;right:0;top:3px;font-size:15px;color:rgba(255,255,255,.22)}

/* taskbar */
.taskbar{flex:1;background:linear-gradient(90deg,#cfe3e9,#e2e6de 14%,#cfe0e6 22%,#cddce4 55%,#cfdde4);display:flex;color:#111}
.sysbtns{display:flex;width:243px;flex:none}
.sb{width:60px;display:flex;align-items:center;justify-content:center}
.apps{display:flex;flex:none}
.app{width:62px;height:50px;display:flex;align-items:center;justify-content:center;position:relative}
.app.on::after{content:"";position:absolute;left:5px;right:5px;bottom:0;height:3px;background:#0078d4}
.app.light{background:#e9eff3}
.app.light::after{left:0;right:0}
.tray{display:flex;align-items:center;margin-left:auto;padding-right:29px;height:50px}
.moon{margin-right:10px}
.temp,.cond{font-size:16.500px;color:#222}
.cond{margin-left:13px}
.tc{display:flex;align-items:center;justify-content:center;flex:none}
.ml39{margin-left:31px}.ml14{margin-left:14px}.ml16{margin-left:13px}.ml8{margin-left:9px}.ml13{margin-left:13px}
.eng{font-size:14px;margin-left:13px;width:28px;color:#222}
.clock{display:flex;flex-direction:column;align-items:center;width:76px;margin-left:16px;font-size:14px;line-height:23px;color:#222}
.notif{position:relative;margin-left:22px;width:23px;height:30px;display:block}
.badge{position:absolute;left:10px;top:13px;width:18px;height:18px;border-radius:50%;background:#dfe5e8;border:1px solid #777;font:400 13px/16px "Noto Sans",sans-serif;text-align:center;color:#111}
```
